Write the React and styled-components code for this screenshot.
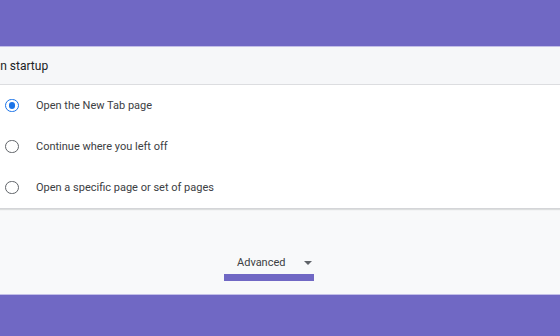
import React from "react";
import styled, { createGlobalStyle } from "styled-components";

const Global = createGlobalStyle`
  html, body { margin: 0; padding: 0; }
  body {
    width: 560px;
    height: 336px;
    overflow: hidden;
    background: #f8f9fa;
    font-family: Roboto, "Noto Sans", Arial, sans-serif;
  }
`;

const Page = styled.div`
  display: flex;
  flex-direction: column;
  width: 560px;
  height: 336px;
  overflow: hidden;
`;

const Band = styled.div`
  flex: none;
  height: ${(p) => p.$h}px;
  background: #7068c4;
  ${(p) => (p.$edge === "bottom" ? "border-bottom" : "border-top")}: 1px solid #c3bfe8;
`;

const Card = styled.section`
  margin: 0 -30px 0 -20px;
  background: #fff;
  border-bottom: 1px solid #d4d5d8;
  box-shadow: 0 1px 1px rgba(60, 64, 67, 0.15);
`;

const Header = styled.div`
  height: 37px;
  display: flex;
  align-items: center;
  padding-left: 12px;
  background: #f6f7f9;
  border-bottom: 1px solid #dcdde0;
  font-size: 12px;
  color: #202124;
`;

const Row = styled.label`
  height: 41px;
  display: flex;
  align-items: center;
  padding-left: 25px;
  font-size: 11px;
  color: #3c4043;
`;

const Radio = styled.span`
  box-sizing: border-box;
  width: 13.6px;
  height: 13.6px;
  border-radius: 50%;
  border: 1.8px solid ${(p) => (p.$on ? "#1a73e8" : "#5f6368")};
  display: flex;
  align-items: center;
  justify-content: center;
  margin-right: 17.4px;
  &::after {
    content: "";
    width: 6.5px;
    height: 6.5px;
    border-radius: 50%;
    background: ${(p) => (p.$on ? "#1a73e8" : "transparent")};
  }
`;

const Footer = styled.div`
  flex: 1;
  display: flex;
  flex-direction: column;
  align-items: center;
  justify-content: flex-end;
  padding: 0 0 13px 0;
  margin-left: -22px;
`;

const AdvButton = styled.div`
  box-sizing: border-box;
  width: 90px;
  display: flex;
  align-items: center;
  justify-content: space-between;
  padding: 0 2px 0 13px;
  font-size: 11px;
  color: #3c4043;
  height: 18px;
`;

const Caret = styled.span`
  width: 0;
  height: 0;
  border-left: 4px solid transparent;
  border-right: 4px solid transparent;
  border-top: 4px solid #5f6368;
  margin-top: 2px;
`;

const Underline = styled.div`
  width: 90px;
  height: 7px;
  margin-top: 3px;
  background: #7068c4;
`;

const options = [
  { label: "Open the New Tab page", on: true },
  { label: "Continue where you left off" },
  { label: "Open a specific page or set of pages" },
];

export default function App() {
  return (
    <>
      <Global />
      <Page>
        <Band $h={46} $edge="bottom" />
        <Card>
          <Header>On startup</Header>
          {options.map((o) => (
            <Row key={o.label}>
              <Radio $on={o.on} />
              {o.label}
            </Row>
          ))}
        </Card>
        <Footer>
          <AdvButton>
            Advanced
            <Caret />
          </AdvButton>
          <Underline />
        </Footer>
        <Band $h={41} $edge="top" />
      </Page>
    </>
  );
}
